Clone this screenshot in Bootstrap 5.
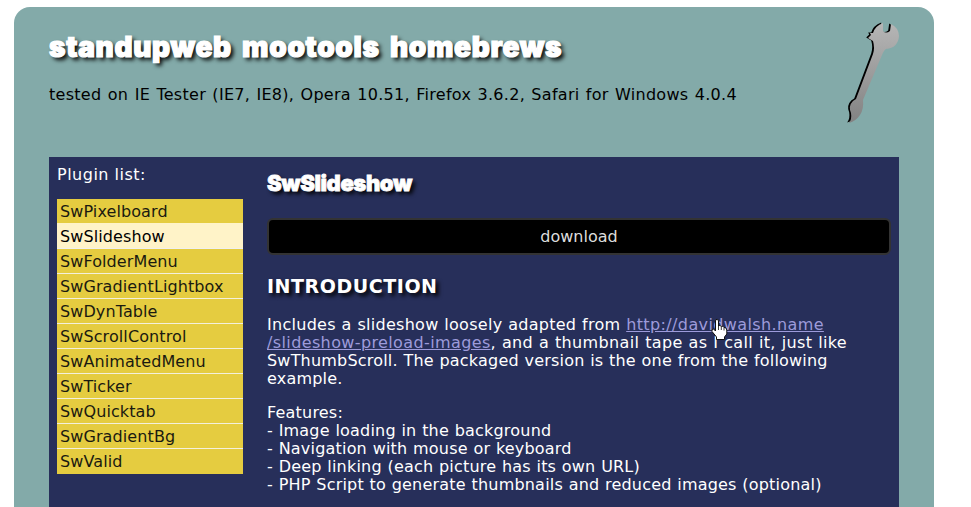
<!DOCTYPE html>
<html lang="en">
<head>
<meta charset="utf-8">
<meta name="viewport" content="width=device-width, initial-scale=1">
<title>standupweb mootools homebrews</title>
<link rel="stylesheet" href="https://cdn.jsdelivr.net/npm/bootstrap@5.3.0/dist/css/bootstrap.min.css">
<style>
html, body { height: 100%; overflow: hidden; }
body { font: 16px/18px Verdana, "DejaVu Sans", sans-serif; color: #000; background: #fff; }
.page-shell { width: 920px; height: 520px; margin: 7px 0 0 14px; padding: 0 35px; background: #83aaa9; border-radius: 16px 16px 0 0; }
.masthead { height: 150px; }
.display-face { font-family: "Bauhaus 93", Inter, sans-serif; font-weight: 900; color: #fff; -webkit-text-stroke: 1.2px #fff; text-shadow: 3px 3px 4px #000; white-space: nowrap; }
.site-title { font-size: 28px; line-height: 36px; padding-top: 22px; letter-spacing: .68px; word-spacing: 4px; }
.tested { margin-top: 21px; white-space: nowrap; letter-spacing: .28px; word-spacing: 1px; }
.wrench { width: 56px; height: 106px; margin: 13px -1px 0 0; }
.panel { height: 370px; background: #272f5a; color: #fff; padding: 0 8px; }
.plugins { width: 186px; padding-top: 9px; }
.plugins-label { letter-spacing: .5px; }
.plugins .list-group { margin-top: 15px; }
.plugins .list-group-item { height: 25px; padding: 3px 3px 0; border: 0; border-bottom: 1px solid #f3f0dc; background: #e5cc40; color: #1a1a10; line-height: 19px; letter-spacing: .1px; }
.plugins .list-group-item:first-child { border-bottom-color: #fff3c8; }
.plugins .list-group-item.active { background: #fff3c8; color: #000; margin: 0; border-bottom-color: #f0f0f0; }
.plugin-body { margin-left: 24px; width: 624px; }
.plugin-title { font-size: 22px; line-height: 28px; padding-top: 12px; letter-spacing: -.4px; -webkit-text-stroke-width: .8px; }
.btn-download { height: 37px; margin-top: 21px; border: 2px solid #333; border-radius: 6px; background: #000; color: #ddd; font-size: 16px; line-height: 18px; padding: 0; }
.section-title { font-size: 19px; font-weight: 700; line-height: 24px; margin-top: 19px; letter-spacing: .55px; text-shadow: 3px 3px 4px #000; }
.copy { white-space: nowrap; letter-spacing: .2px; word-spacing: .4px; }
.intro { margin-top: 18px; }
.intro-lead { letter-spacing: .28px; }
.copy a { color: #9d9bdb; letter-spacing: .38px; }
.loose { letter-spacing: .36px; }
.pointer { left: 711px; top: 318px; width: 17px; height: 23px; }
</style>
</head>
<body>
<div class="page-shell">
  <header class="masthead d-flex justify-content-between">
    <div>
      <h1 class="display-face site-title mb-0">standupweb mootools homebrews</h1>
      <p class="tested mb-0">tested on IE Tester (IE7, IE8), Opera 10.51, Firefox 3.6.2, Safari for Windows 4.0.4</p>
    </div>
    <svg class="wrench" viewBox="844 20 56 106" aria-hidden="true">
      <defs><linearGradient id="steel" x1="0" y1="0" x2="0" y2="1"><stop offset="0" stop-color="#b6b6b6"/><stop offset="1" stop-color="#828282"/></linearGradient></defs>
      <path transform="translate(-1.8 -.5)" fill="#000" d="M883 23V31Q886 34 890 31L891 24Q899 28 899 36Q898 48 886 49Q884 50 882 55L863 100Q864 109 860 115Q856 121 849 123Q852 119 851 113Q848 106 853 101L856 99L873 54Q875 48 873 41L868 38L871 35L870 33H873Q875 26 883 23Z"/>
      <path fill="url(#steel)" d="M883 23V31Q886 34 890 31L891 24Q899 28 899 36Q898 48 886 49Q884 50 882 55L863 100Q864 109 860 115Q856 121 849 123Q852 119 851 113Q848 106 853 101L856 99L873 54Q875 48 873 41L868 38L871 35L870 33H873Q875 26 883 23Z"/>
    </svg>
  </header>
  <main class="panel d-flex">
    <nav class="plugins flex-shrink-0">
      <div class="plugins-label">Plugin list:</div>
      <div class="list-group list-group-flush">
        <a class="list-group-item" href="#">SwPixelboard</a>
        <a class="list-group-item active" href="#">SwSlideshow</a>
        <a class="list-group-item" href="#">SwFolderMenu</a>
        <a class="list-group-item" href="#">SwGradientLightbox</a>
        <a class="list-group-item" href="#">SwDynTable</a>
        <a class="list-group-item" href="#">SwScrollControl</a>
        <a class="list-group-item" href="#">SwAnimatedMenu</a>
        <a class="list-group-item" href="#">SwTicker</a>
        <a class="list-group-item" href="#">SwQuicktab</a>
        <a class="list-group-item" href="#">SwGradientBg</a>
        <a class="list-group-item" href="#">SwValid</a>
      </div>
    </nav>
    <section class="plugin-body">
      <h2 class="display-face plugin-title mb-0">SwSlideshow</h2>
      <a class="btn btn-download d-flex align-items-center justify-content-center" href="#">download</a>
      <h3 class="section-title mb-0">INTRODUCTION</h3>
      <p class="copy intro mb-0"><span class="intro-lead">Includes a slideshow loosely adapted from </span><a href="#">http://davidwalsh.name<br>/slideshow-preload-images</a><span class="loose">, and a thumbnail tape as I call it, just like</span><br>SwThumbScroll. The packaged version is the one from the following<br>example.</p>
      <p class="copy mb-0 mt-3">Features:<br>- Image loading in the background<br>- Navigation with mouse or keyboard<br>- Deep linking (each picture has its own URL)<br>- PHP Script to generate thumbnails and reduced images (optional)</p>
    </section>
  </main>
</div>
<svg class="pointer position-absolute" viewBox="0 0 17 23" aria-hidden="true"><path d="M5 1.5Q7 .5 7.5 3V8Q9 6.5 10.3 8.5Q12 7.5 13 9.5Q15.5 9 15.8 12V16L13.5 19V21.5H5.5V19L1 13.5Q.5 11 2.5 11L4.5 13V3Z" fill="#fff" stroke="#111" stroke-width="1"/><path d="M7.5 8V12M10.3 8.7V12M13 9.5V12.5" stroke="#222" stroke-width=".9"/></svg>
<script src="https://cdn.jsdelivr.net/npm/bootstrap@5.3.0/dist/js/bootstrap.bundle.min.js"></script>
</body>
</html>
